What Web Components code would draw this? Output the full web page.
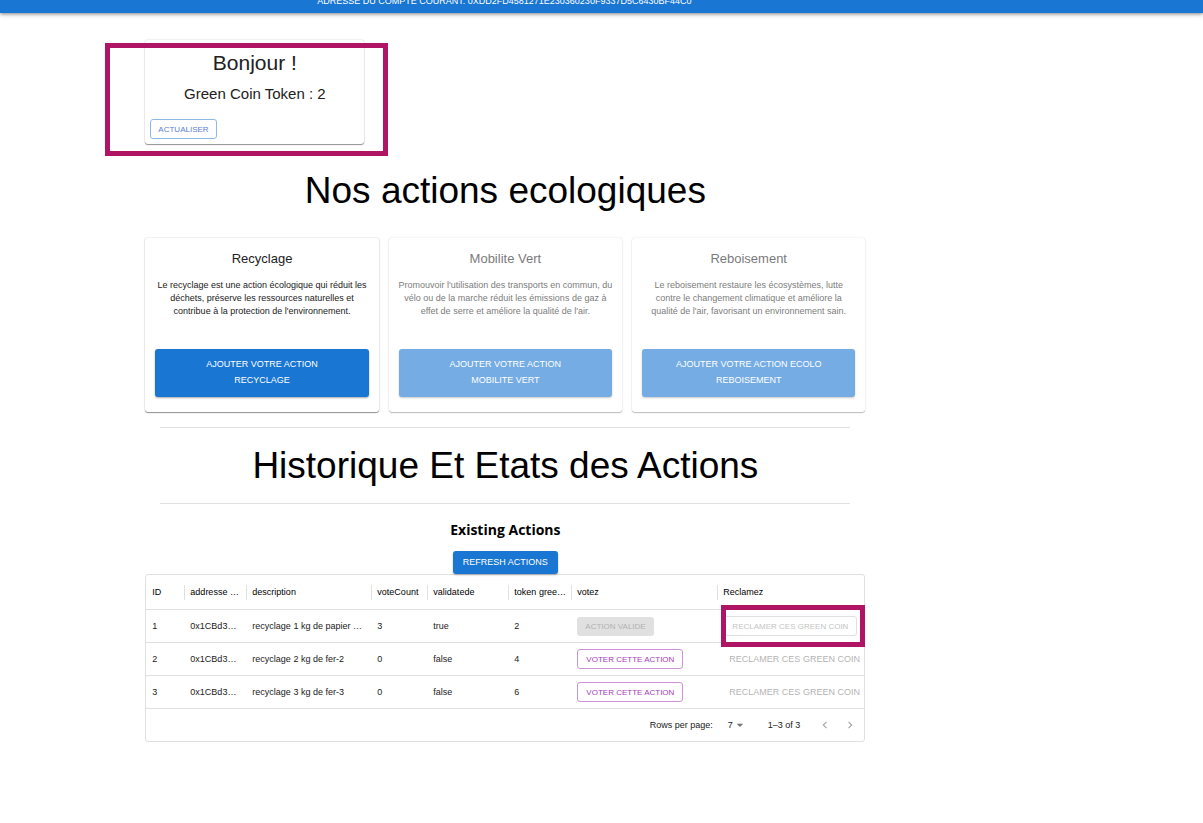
<!DOCTYPE html>
<html lang="fr">
<head>
<meta charset="utf-8">
<meta name="viewport" content="width=device-width, initial-scale=1">
<title>Green Coin</title>
<style>
  body { margin: 0; background: #fff; color: #000; font: 9px/13px "Liberation Sans", Arial, sans-serif; }
</style>
</head>
<body>
<green-app></green-app>

<script>
const define = (name, html, setup) => {
  const template = document.createElement('template');
  template.innerHTML = html;
  customElements.define(name, class extends HTMLElement {
    constructor() {
      super();
      this.attachShadow({ mode: 'open' }).append(template.content.cloneNode(true));
    }
    connectedCallback() { if (setup) setup(this, this.shadowRoot); }
  });
};

/* Button: the variant attribute picks its colours and size */
define('ui-button', `
  <style>
    :host { display: inline-block; vertical-align: middle; }
    button { box-sizing: border-box; display: block; width: 100%; margin: 0; border: 0; border-radius: 3px;
      background: none; color: #1976d2; font: inherit; text-transform: uppercase; cursor: pointer; white-space: nowrap; }
    button:disabled { cursor: default; }
    :host([variant="primary"]) button { height: 23px; padding: 0 10px; background: #1976d2; color: #fff;
      box-shadow: 0 1px 2px rgba(0,0,0,.3); }
    :host([variant="block"]) button { padding: 7px 30px 9px; background: #1976d2; color: #fff; line-height: 16px;
      white-space: normal; box-shadow: 0 1px 2px rgba(0,0,0,.35); }
    :host([variant="outlined"]) button { height: 20px; padding: 0 7px; border: 1px solid #8cbae8; color: #5c7fcf; font-size: 8px; }
    :host([variant="vote"]) button { height: 20px; padding: 0 8px; border: 1px solid #cd93d7; color: #a63bb9; font-size: 8px; }
    :host([variant="done"]) button { height: 19px; padding: 0 8px; background: #e0e0e0; color: #b2b2b2; font-size: 8px; }
    :host([variant="claim"]) button { height: 20px; padding: 0 8px; border: 1px solid #e0e0e0; color: #c4c4c4; font-size: 8px; }
    :host([variant="text"]) button { height: 20px; padding: 0 6px; color: #b4b4b4; }
  </style>
  <button type="button"><slot></slot></button>`,
  (host, root) => { root.querySelector('button').disabled = host.hasAttribute('disabled'); });

define('app-bar', `
  <style>
    :host { display: block; background: #1976d2; color: #fff;
      box-shadow: 0 1px 3px rgba(0,0,0,.35), 0 2px 5px rgba(0,0,0,.15); }
    header { box-sizing: border-box; height: 13px; padding: 0 0 5px 12%; display: flex; align-items: flex-end; }
    p { width: 100%; max-width: 720px; margin: 0; text-align: center; text-transform: uppercase; }
  </style>
  <header><p><slot></slot></p></header>`);

define('mark-frame', `
  <style>
    :host { position: absolute; box-sizing: border-box; border: 5px solid #b01464; pointer-events: none; }
  </style>`);

define('token-card', `
  <style>
    :host { position: relative; display: block; box-sizing: border-box; width: 219px; padding: 10px 5px 5px;
      border-radius: 3px; box-shadow: 0 1px 1px rgba(0,0,0,.4), 0 0 2px rgba(0,0,0,.2); color: #212121; }
    h1 { margin: 0; font-size: 21px; line-height: 26px; font-weight: 400; text-align: center; }
    p { margin: 8px 0 15px; font-size: 15px; line-height: 20px; text-align: center; }
    mark-frame { inset: 3px -24px -12px -40px; }
  </style>
  <h1>Bonjour !</h1>
  <p>Green Coin Token : <slot></slot></p>
  <ui-button variant="outlined">Actualiser</ui-button>
  <mark-frame></mark-frame>`);

define('action-card', `
  <style>
    :host { display: flex; flex-direction: column; box-sizing: border-box; padding: 11px 10px 15px; border-radius: 3px;
      box-shadow: 0 1px 1px rgba(0,0,0,.4), 0 0 2px rgba(0,0,0,.2); color: #212121; text-align: center; }
    :host([inactive]) { opacity: .6; }
    h3 { margin: 0 0 10px; font-size: 13px; line-height: 20px; font-weight: 400; }
    p { margin: 0 -1px 31px; flex: 1; }
  </style>
  <h3><slot name="title"></slot></h3>
  <p><slot></slot></p>
  <ui-button variant="block"><slot name="action"></slot></ui-button>`,
  (host, root) => { root.querySelector('ui-button').toggleAttribute('disabled', host.hasAttribute('inactive')); });

define('section-title', `
  <style>
    :host { display: block; text-align: center; }
    h2 { margin: 0; font-size: 37px; line-height: 45px; font-weight: 400; }
  </style>
  <h2><slot></slot></h2>`);

define('page-select', `
  <style>
    :host { display: inline-grid; align-items: center; }
    select { grid-area: 1 / 1; appearance: none; border: 0; background: none; margin: 0; padding: 0 11px 0 0;
      font: inherit; color: inherit; height: 16px; width: 16px; }
    svg { grid-area: 1 / 1; justify-self: end; pointer-events: none; width: 8px; height: 8px; fill: #757575; }
  </style>
  <select aria-label="Rows per page"><option>7</option></select>
  <svg viewBox="0 0 8 8"><path d="M.6 2.7h6.6L3.9 6z"/></svg>`);

define('table-pager', `
  <style>
    :host { display: flex; align-items: center; justify-content: flex-end; box-sizing: border-box; height: 32px;
      padding-right: 7px; color: #212121; }
    page-select { margin: 0 24px 0 15px; }
    nav { display: flex; gap: 10px; margin-left: 17px; }
    button { border: 0; margin: 0; padding: 0; background: none; width: 15px; height: 15px; display: grid; place-items: center; }
    svg { width: 10px; height: 10px; fill: none; stroke: #a8a8a8; stroke-width: 1.2; }
  </style>
  <span>Rows per page:</span>
  <page-select></page-select>
  <span>1–3 of 3</span>
  <nav aria-label="Pagination">
    <button type="button" disabled aria-label="Previous page"><svg viewBox="0 0 10 10"><path d="M6.5 1.8 3.3 5l3.2 3.2"/></svg></button>
    <button type="button" disabled aria-label="Next page"><svg viewBox="0 0 10 10"><path d="M3.5 1.8 6.7 5 3.5 8.2"/></svg></button>
  </nav>`);

define('action-table', `
  <style>
    :host { display: block; border: 1px solid #e0e0e0; border-radius: 3px; color: #212121; }
    table { width: 100%; table-layout: fixed; border-collapse: separate; border-spacing: 0; }
    th, td { box-sizing: border-box; padding: 0 2px 0 6px; border-bottom: 1px solid #e0e0e0; text-align: left;
      font-weight: 400; white-space: nowrap; }
    th { height: 35px; color: #000; }
    th + th { background: linear-gradient(#e0e0e0, #e0e0e0) left center / 1px 15px no-repeat; }
    td { height: 33px; }
    td:last-child { position: relative; }
    mark-frame { inset: -5px -1px -5px 4px; }
    .id { width: 38px; } .address { width: 62px; } .description { width: 125px; } .votes { width: 56px; }
    .valid { width: 81px; } .token { width: 63px; } .vote { width: 146px; }
  </style>
  <table>
    <colgroup><col class="id"><col class="address"><col class="description"><col class="votes"><col class="valid"><col class="token"><col class="vote"><col></colgroup>
    <thead><tr><th>ID</th><th>addresse …</th><th>description</th><th>voteCount</th><th>validatede</th><th>token gree…</th><th>votez</th><th>Reclamez</th></tr></thead>
    <tbody></tbody>
  </table>
  <table-pager></table-pager>`,
  (host, root) => {
    const rows = [
      [1, 'recyclage 1 kg de papier …', 3, true, 2],
      [2, 'recyclage 2 kg de fer-2', 0, false, 4],
      [3, 'recyclage 3 kg de fer-3', 0, false, 6]
    ];
    root.querySelector('tbody').innerHTML = rows.map(([id, text, votes, valid, token]) => `
      <tr><td>${id}</td><td>0x1CBd3…</td><td>${text}</td><td>${votes}</td><td>${valid}</td><td>${token}</td>
      <td>${valid ? '<ui-button variant="done" disabled>Action valide</ui-button>' : '<ui-button variant="vote">Voter cette action</ui-button>'}</td>
      <td>${valid ? '<ui-button variant="claim" disabled>Reclamer ces green coin</ui-button><mark-frame></mark-frame>' : '<ui-button variant="text" disabled>Reclamer ces green coin</ui-button>'}</td></tr>`).join('');
  });

define('green-app', `
  <style>
    :host { display: block; }
    main { width: 60%; min-width: 680px; max-width: 720px; margin: 27px 0 80px 12%; padding-left: 1px; }
    .intro { margin: 24px 0 25px; }
    .cards { display: grid; grid-template-columns: repeat(3, 1fr); gap: 10px; }
    hr { margin: 15px; border: 0; border-top: 1px solid #e0e0e0; }
    h4 { margin: 15px 0 10px; font: 700 14px/22px "Open Sans", "Noto Sans", sans-serif; text-align: center; }
    .refresh { display: flex; justify-content: center; }
  </style>
  <app-bar>Adresse du compte courant: 0xDD2FD4581271E230360230F9337D5C6430BF44C0</app-bar>
  <main>
    <token-card>2</token-card>
    <section-title class="intro">Nos actions ecologiques</section-title>
    <section class="cards">
      <action-card>
        <span slot="title">Recyclage</span>
        Le recyclage est une action écologique qui réduit les déchets, préserve les ressources naturelles et contribue à la protection de l'environnement.
        <span slot="action">Ajouter votre action recyclage</span>
      </action-card>
      <action-card inactive>
        <span slot="title">Mobilite Vert</span>
        Promouvoir l'utilisation des transports en commun, du vélo ou de la marche réduit les émissions de gaz à effet de serre et améliore la qualité de l'air.
        <span slot="action">Ajouter votre action mobilite vert</span>
      </action-card>
      <action-card inactive>
        <span slot="title">Reboisement</span>
        Le reboisement restaure les écosystèmes, lutte contre le changement climatique et améliore la qualité&nbsp;de l'air, favorisant un environnement sain.
        <span slot="action">Ajouter votre action ecolo reboisement</span>
      </action-card>
    </section>
    <hr>
    <section-title>Historique Et Etats des Actions</section-title>
    <hr>
    <h4>Existing Actions</h4>
    <div class="refresh"><ui-button variant="primary">Refresh Actions</ui-button></div>
    <action-table></action-table>
  </main>`);
</script>
</body>
</html>
